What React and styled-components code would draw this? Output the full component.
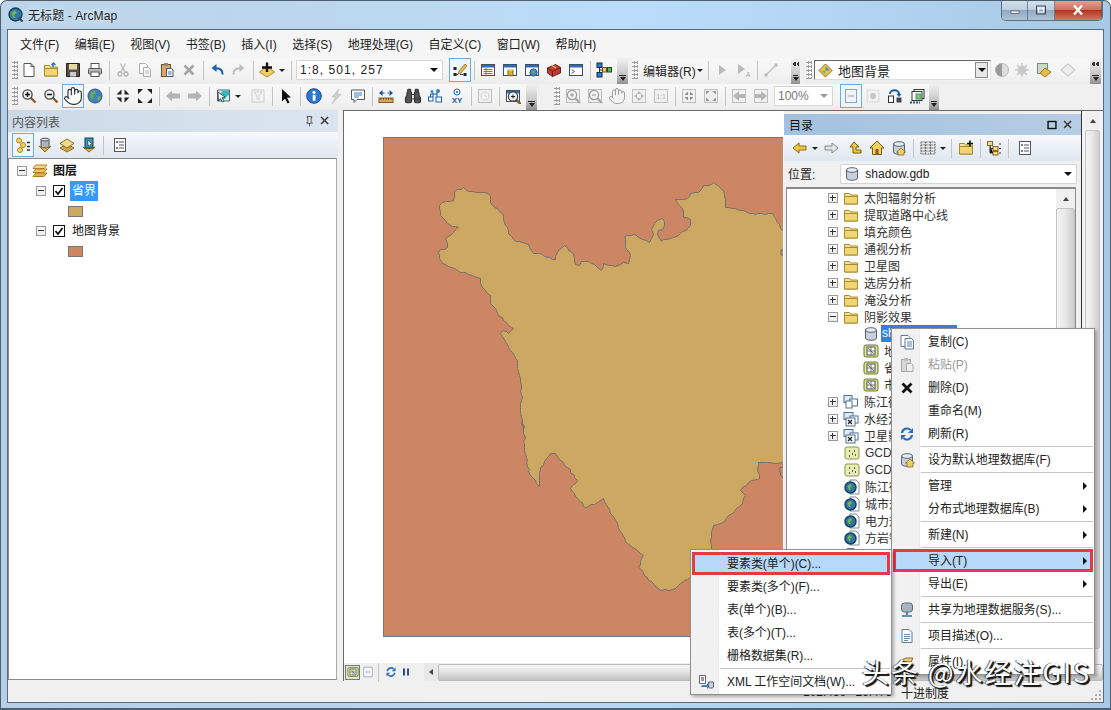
import React, { Fragment } from "react";
import styled, { createGlobalStyle } from "styled-components";
import { Hand, Binoculars } from "lucide-react";

const FONT = `"Liberation Sans", "Noto Sans CJK SC", sans-serif`;

const Global = createGlobalStyle`
  html, body { margin: 0; padding: 0; width: 1111px; height: 710px; overflow: hidden; background: #fff; }
  * { box-sizing: border-box; }
  body { font-family: ${FONT}; font-size: 12px; color: #1c1c1c; }
`;

const Win = styled.div`
  position: relative; width: 1111px; height: 710px; overflow: hidden; display: flex; flex-direction: column;
  background: linear-gradient(90deg, #b4d0e8 0%, #b9d6ee 40%, #b2d6f6 60%, #a9cae6 100%);
  border-radius: 7px 7px 0 0; border: 1px solid #4f5f6e; border-width: 1px 1px 2px 1px;
`;
const TitleBar = styled.div`
  height: 28px; flex: none; display: flex; align-items: center; padding: 0 7px 1px 7px; gap: 4px;
  background: linear-gradient(90deg, rgba(255,255,255,.12), rgba(255,255,255,.05) 30%, rgba(190,225,255,.55) 55%, rgba(255,255,255,0) 90%);
`;
const TitleText = styled.span`color: #222; text-shadow: 0 0 6px rgba(255,255,255,.9); letter-spacing: .1px;`;
const Caption = styled.div`
  position: absolute; right: 7px; top: -1px; height: 21px; width: 102px; display: flex; overflow: hidden;
  border: 1px solid #5f6f80; border-top: 0; border-radius: 0 0 5px 5px;
`;
const CapBtn = styled.div`
  display: flex; align-items: center; justify-content: center; width: ${p => p.$w}px; color: #fff;
  border-right: 1px solid rgba(70,85,100,.6);
  background: ${p => p.$close
    ? "linear-gradient(#e2a79c, #d0705f 48%, #b8341f 52%, #cf7767)"
    : "linear-gradient(#d4e1ec, #bdcfdf 48%, #8faac2 52%, #afc4d6)"};
`;
const Client = styled.div`
  height: 674px; margin: 0 6px; flex: none; display: flex; flex-direction: column;
  background: #f0f0f0; border: 1px solid #5a6a78;
`;
const MenuBar = styled.div`height: 28px; flex: none; display: flex; align-items: center; padding: 0 0 2px 4.25px; background: #f5f5f5;`;
const MenuItem = styled.span`padding: 0 7.75px; white-space: nowrap; color: #222;`;
const ToolRow = styled.div`height: 26px; flex: none; display: flex; padding-left: 4px; background: #f0f0f0; align-items: stretch;`;
const ToolGroup = styled.div`
  display: flex; align-items: center; flex: none; margin-left: ${p => p.$ml || 0}px; padding-bottom: 2px;
  background: linear-gradient(#f8f8f8, #f3f3f3 60%, #ececec);
`;
const Grip = styled.div`
  width: 6px; height: 18px; flex: none;
  background: radial-gradient(circle at 1.5px 1.5px, #9a9a9a 1px, transparent 1.2px) 1px 0 / 3px 4px;
`;
const Handle = styled.div`
  position: relative; width: ${p => p.$w || 11}px; align-self: stretch; flex: none; margin-bottom: -2px;
  background: linear-gradient(#f2f2f2, #c9c9c9 60%, #8f8f8f);
  &::before { content: ""; position: absolute; left: 2px; right: 2px; bottom: 8px; height: 1px; background: #222; }
  &::after { content: ""; position: absolute; left: 50%; margin-left: -3px; bottom: 3px; border: 3px solid transparent; border-top: 4px solid #222; border-bottom: 0; }
`;
const Chev = styled.span`
  position: absolute; z-index: 1; top: 4px; left: 1px; right: 1px; height: 4px;
  background: conic-gradient(from 45deg at 0 50%, #333 90deg, transparent 0) 0 0 / 4px 4px repeat-x;
`;
const Tool = styled.div`
  width: ${p => p.$w || 22}px; height: ${p => p.$active ? 24 : 22}px; flex: none; display: flex; align-items: center; justify-content: center;
  ${p => p.$active ? "background: #eef5fc; outline: 1px solid #6fa8dc; outline-offset: -1px;" : ""}
`;
const Sep = styled.div`width: 6px; flex: none; height: 19px; display: flex; justify-content: center; &::before { content: ""; width: 1px; background: #c4c4c4; }`;
const Caret = styled.div`width: 8px; flex: none; display: flex; justify-content: center; &::before { content: ""; border: 3px solid transparent; border-top: 3px solid #222; border-bottom: 0; }`;
const Gap = styled.div`width: ${p => p.$w}px; flex: none;`;
const IconSvg = styled.svg`
  width: ${p => p.$s || 16}px; height: ${p => p.$s || 16}px; flex: none; display: block;
  ${p => p.$dim ? "filter: grayscale(1) opacity(.5);" : ""}
`;
const MapSvg = styled.svg`width: 400px; height: 500px; display: block; flex: none;`;
const Combo = styled.div`
  width: ${p => p.$w}px; height: 20px; flex: none; display: flex; align-items: center; padding: 0 5px 0 3px; background: #fff;
  border: 1px solid ${p => p.$dark ? "#555" : "#d4d4d4"}; border-radius: 1px; white-space: nowrap;
  ${p => p.$dark ? "border-color: #666 #ddd #ddd #666;" : ""}
`;
const ComboLabel = styled.span`flex: 1; font-size: ${p => p.$fs || 12}px; letter-spacing: ${p => p.$ls || 0}px; color: ${p => p.$c || "#222"}; display: flex; align-items: center; gap: 5px;`;
const ComboDrop = styled.div`
  width: 13px; height: 16px; flex: none; display: flex; align-items: center; justify-content: center; margin-right: -3px;
  ${p => p.$box ? "background:#e8e8e8; border:1px solid #888;" : ""}
  &::before { content: ""; border: 4px solid transparent; border-top: 4px solid ${p => p.$c || "#111"}; border-bottom: 0; }
`;
const EditorLabel = styled.span`width: 51px; flex: none; white-space: nowrap; color: #222;`;

const Main = styled.div`height: 572px; flex: none; display: flex;`;
const Toc = styled.div`width: 330px; flex: none; display: flex; flex-direction: column; margin-right: 5px;`;
const PaneHead = styled.div`
  height: ${p => p.$h}px; flex: none; display: flex; align-items: center; padding: 0 5px 0 ${p => p.$pl}px;
  background: ${p => p.$blue ? "linear-gradient(90deg,#a3c1df,#b6cde3)" : "linear-gradient(90deg,#cbd9e7,#dbe5ef)"};
  color: ${p => p.$blue ? "#111" : "#555"};
`;
const PaneTitle = styled.span`flex: 1;`;
const PaneBtn = styled.div`width: 16px; height: 16px; flex: none; display: flex; align-items: center; justify-content: center;`;
const PaneTools = styled.div`
  height: ${p => p.$h}px; flex: none; display: flex; align-items: center; padding-left: ${p => p.$pl}px;
  background: linear-gradient(#f6f8fb, #dfe7f0);
`;
const TocTree = styled.div`flex: 1; margin: 0 1px 2px 0; padding-top: 2px; background: #fff; border: 1px solid #8a8a8a; border-right-color: #a8a8a8;`;
const TocRow = styled.div`height: 20px; display: flex; align-items: center; padding-left: ${p => p.$in}px;`;
const Expand = styled.div`
  position: relative; width: 10px; height: 10px; flex: none; margin-right: ${p => p.$mr || 0}px; background: linear-gradient(#fff, #e8e8e8); border: 1px solid #9a9a9a;
  &::before { content: ""; position: absolute; left: 1px; right: 1px; top: 3px; height: 1px; background: #333; }
  ${p => p.$plus ? `&::after { content: ""; position: absolute; top: 1px; bottom: 1px; left: 3px; width: 1px; background: #333; }` : ""}
`;
const Check = styled.div`
  width: 12px; height: 12px; flex: none; background: #fff; border: 1px solid #111; display: flex; align-items: center; justify-content: center;
`;
const LayerName = styled.span`
  margin-left: ${p => p.$ml}px; padding: 0 2px; height: ${p => p.$sel ? 20 : 16}px; line-height: ${p => p.$sel ? 20 : 16}px;
  ${p => p.$sel ? "background: #3399ff; color: #fff;" : "color:#111;"}
`;
const Swatch = styled.div`width: 15px; height: 11px; background: ${p => p.$c}; border: 1px solid #777;`;
const SwatchRow = styled.div`height: 20px; display: flex; align-items: center; padding-left: 59px;`;

const MapPane = styled.div`flex: 1; min-width: 0; display: flex; flex-direction: column; background: #f0f0f0;`;
const MapRow = styled.div`height: 553px; flex: none; display: flex; border: 1px solid #6a6a6a; border-width: 1px 0 0 1px;`;
const MapCanvas = styled.div`width: 440px; flex: none; overflow: hidden; background: #fff; padding: 26px 0 0 39px;`;
const Catalog = styled.div`width: 298px; flex: none; display: flex; flex-direction: column; background: #f0f0f0; padding-top: 3px; border-right: 1px solid #333;`;
const LocationRow = styled.div`height: 26px; flex: none; display: flex; align-items: center; padding: 0 3px 1px 4px; gap: 25px;`;
const CatTree = styled.div`flex: 1; min-height: 0; display: flex; margin: 0 5px 0 2px; background: #fff; border: 1px solid #8a8a8a; border-width: 2px 1px 1px 1px; overflow: hidden;`;
const CatList = styled.div`flex: 1; min-width: 0;`;
const CatRow = styled.div`height: 17px; display: flex; align-items: center; white-space: nowrap; overflow: hidden; padding-left: ${p => p.$in}px;`;
const CatText = styled.span`
  margin-left: ${p => p.$sel ? 2 : 5}px; color: #333; font-size: 12px;
  ${p => p.$sel ? "background: #2f80e8; color: #fff; width: 76px; padding-left: 1px; height: 17px; line-height: 17px;" : ""}
`;
const VBar = styled.div`
  width: ${p => p.$w}px; flex: none; display: flex; flex-direction: column; align-items: stretch; background: #f0f0f0;
`;
const VBtn = styled.div`height: 19px; flex: none; display: flex; align-items: center; justify-content: center; &::before { content: ""; border: 3px solid transparent; border-bottom: 4px solid #444; border-top: 0; }`;
const VThumb = styled.div`flex: 1; margin-bottom: 14px; background: linear-gradient(90deg, #f4f4f4, #e6e6e6 50%, #cdcdcd); border: 1px solid #c4c4c4; border-radius: 2px;`;
const MapBottom = styled.div`height: 18px; flex: none; display: flex; align-items: center; padding-left: 1px; border-left: 1px solid #666;`;
const ViewBtn = styled.div`width: 15px; height: 15px; flex: none; display: flex; align-items: center; justify-content: center; ${p => p.$on ? "background:#dbe8d8; outline:1px solid #777; outline-offset:-1px;" : ""}`;
const HArrow = styled.div`width: 14px; height: 18px; margin-left: 11px; flex: none; display: flex; align-items: center; justify-content: center; background: #e8e8e8; &::before { content: ""; border: 3px solid transparent; border-right: 4px solid #444; border-left: 0; }`;
const HThumb = styled.div`flex: 1; height: 17px; background: linear-gradient(#f4f4f4, #e4e4e4 45%, #c4c4c4); border: 1px solid #bbb; border-radius: 2px;`;
const RightGap = styled.div`width: 3px; flex: none; background:#f4f4f4;`;
const Status = styled.div`height: 20px; flex: none; display: flex; align-items: center; padding-left: 795px; background: #f0f0f0; color: #222; gap: 9px; white-space: nowrap; position: relative;`;
const Resize = styled.div`position: absolute; right: 2px; bottom: 2px; width: 11px; height: 11px; background: radial-gradient(circle, #aaa 1px, transparent 1.2px) 0 0 / 4px 4px; clip-path: polygon(100% 0, 100% 100%, 0 100%);`;

const Popup = styled.div`
  position: absolute; z-index: ${p => p.$z}; left: ${p => p.$x}px; top: ${p => p.$y}px; width: ${p => p.$w}px; padding: ${p => p.$pt}px 1px 1px;
  background: linear-gradient(90deg, #f1f1f1 0, #f1f1f1 27px, #e6e6e6 28px, #fff 28px);
  border: 1px solid #8f8f8f; box-shadow: 2px 2px 3px rgba(0,0,0,.28);
`;
const PopItem = styled.div`
  position: relative; height: 23px; display: flex; align-items: center; padding-right: 8px; white-space: nowrap; color: ${p => p.$off ? "#9b9b9b" : "#222"};
  ${p => p.$hot ? "background: #b8d8f9; outline: 3px solid #e53a46; outline-offset: -3px;" : ""}
`;
const PopIcon = styled.div`width: 27px; flex: none; margin-right: 8px; display: flex; justify-content: center;`;
const PopLabel = styled.span`flex: 1; padding-bottom: 2px; letter-spacing: -.05px;`;
const PopArrow = styled.div`border: 4px solid transparent; border-left: 4px solid #111; border-right: 0; margin-right: -2px;`;
const PopSep = styled.div`height: 3px; margin-left: 28px; display: flex; align-items: center; &::before { content: ""; flex: 1; height: 1px; background: #c6c6c6; }`;
const Watermark = styled.div`
  position: absolute; z-index: 5; left: 861px; top: 653px; font: 27px/36px "Noto Sans CJK SC", "Liberation Sans", sans-serif; letter-spacing: 2px; white-space: nowrap;
  color: #fff; text-shadow: 2px 2px 1px #111, 1px 1px 1px #222, -1px 0 1px rgba(0,0,0,.7);
`;

/* ---------- icons ---------- */
const Y = "#f2cf5e", YD = "#b98a1e";
const lines = <path d="M5 6.5h6M5 8.5h6M5 10.5h6M5 12.5h4" stroke="#6c8aa6" />;
const folderShape = <><path d="M1.5 3.5h5l1 1.5h7v9h-13z" fill="#f7e49a" stroke="#a98a2e" /><path d="M1.5 6.5h13v7.5h-13z" fill="#f2d675" stroke="#a98a2e" /></>;
const win = c => <><rect x="1.5" y="2.5" width="13" height="11" fill="#fff" stroke="#3d4f66" /><rect x="2" y="3" width="12" height="2.5" fill={c} /></>;
const cyl = <><path d="M2.5 4v8c0 1.3 2.4 2.3 5.5 2.3s5.5-1 5.5-2.3V4z" fill="#c7d0dc" stroke="#5a6573" /><ellipse cx="8" cy="4" rx="5.5" ry="2.3" fill="#e7ecf2" stroke="#5a6573" /></>;
const glass = (x = 6.5, y = 6.5) => <><path d={`M${x + 3} ${y + 3}l5 5`} stroke="#8a5a2a" strokeWidth="2.4" /><circle cx={x} cy={y} r="4.6" fill="#eef3f8" stroke="#444" strokeWidth="1.3" /></>;
const globe = <><circle cx="8" cy="8" r="7" fill="#3f7fc4" stroke="#2a5a90" /><path d="M4 4.5l4-2 1 3-3 2 1 3-2 1-2-3zM10 9l3-1 .5 3-2.5 2z" fill="#6fae4a" /></>;
const arrows = o => <path d={o ? "M1 1h5L1 6zM15 1h-5l5 5zM1 15h5l-5-5zM15 15h-5l5-5z" : "M6.5 6.5h-5l5-5zM9.5 6.5h5l-5-5zM6.5 9.5h-5l5 5zM9.5 9.5h5l-5 5z"} fill="#222" />;
const gridW = <rect x="1.5" y="1.5" width="13" height="13" fill="#eee" stroke="#888" />;

const I = {
  arcmap: <><circle cx="7.5" cy="7.5" r="6.5" fill="#2f78a8" stroke="#16435f" strokeWidth="1.4" /><path d="M3 6l4-3 2 3-3 2 1 3-2 0z" fill="#79b24e" /><path d="M10.5 10.5l4 4" stroke="#445" strokeWidth="2.4" /></>,
  new: <><path d="M3 1.5h7l3 3v10H3z" fill="#fff" stroke="#555" /><path d="M10 1.5v3h3" fill="none" stroke="#555" /></>,
  open: <>{folderShape}<path d="M10 5V1.5M8.5 3l2-2 2 2" stroke="#2a6fb0" fill="none" strokeWidth="1.3" /></>,
  save: <><path d="M1.5 1.5h13v13h-13z" fill="#5a5040" stroke="#222" /><rect x="4" y="2" width="8" height="5.5" fill="#e6d9a8" /><rect x="5" y="10" width="6" height="4.5" fill="#c8ccd0" /></>,
  print: <><rect x="4" y="1.5" width="8" height="5" fill="#fff" stroke="#555" /><rect x="1.5" y="6.5" width="13" height="5.5" rx="1" fill="#b5bbc2" stroke="#555" /><rect x="4" y="10" width="8" height="4.5" fill="#fff" stroke="#555" /></>,
  cut: <><circle cx="5" cy="12" r="2" fill="none" stroke="#777" strokeWidth="1.3" /><circle cx="11" cy="12" r="2" fill="none" stroke="#777" strokeWidth="1.3" /><path d="M6 10L10.5 1.5M10 10L5.5 1.5" stroke="#777" strokeWidth="1.2" /></>,
  copy: <><path d="M2.5 1.5h6l2 2v8h-8z" fill="#fff" stroke="#667" /><path d="M6.5 5.5h5l2 2v7h-7z" fill="#f4f7fb" stroke="#667" /><path d="M8 9h4M8 11h4" stroke="#5a86b8" /></>,
  paste: <><rect x="2.5" y="2.5" width="9" height="12" fill="#d8a868" stroke="#6a5030" /><rect x="5" y="1" width="4" height="3" fill="#888" /><path d="M7.5 6.5h5l1.5 1.5v6.5H7.5z" fill="#fff" stroke="#556" /><path d="M9 10h3.5M9 12h3.5" stroke="#27c" /></>,
  del: <path d="M3.5 3.5l9 9M12.5 3.5l-9 9" stroke="#555" strokeWidth="2.6" />,
  undo: <><path d="M13.5 12.5c.5-4-2-6.5-7-6" fill="none" stroke="#1d62b0" strokeWidth="2.2" /><path d="M7.5 2L2.5 6l5 4z" fill="#1d62b0" /></>,
  redo: <><path d="M2.5 12.5c-.5-4 2-6.5 7-6" fill="none" stroke="#888" strokeWidth="2.2" /><path d="M8.5 2l5 4-5 4z" fill="#888" /></>,
  add: <><path d="M8 5l7.5 5L8 15 .5 10z" fill={Y} stroke={YD} /><path d="M8 .5v9.5M3 5.5h10" stroke="#111" strokeWidth="2.4" /></>,
  editor: <><path d="M3 12.5h10" stroke="#333" strokeDasharray="3 2" /><rect x="1.5" y="11" width="3" height="3" fill="#222" /><rect x="11.5" y="11" width="3" height="3" fill="#222" /><rect x="1.5" y="5" width="3" height="3" fill="#222" /><path d="M7 9l6-7 2 2-6 7-3 1z" fill="#e9b94a" stroke="#8a6a20" strokeWidth=".7" /></>,
  win1: <>{win("#2f6cb8")}<path d="M3.5 7.5h9M3.5 9.5h9M3.5 11.5h9M6 6v7" stroke="#4a80c0" /></>,
  win2: <>{win("#2f6cb8")}<path d="M6 8v5c0 1 5 1 5 0V8z" fill="#d8b030" stroke="#7a6010" /><ellipse cx="8.5" cy="8" rx="2.5" ry="1" fill="#f4dc70" /></>,
  win3: <>{win("#2f6cb8")}<circle cx="9.5" cy="10.5" r="3.6" fill="#3f8ac4" stroke="#2a5a90" /><path d="M8 9l2-1 1 2-2 2z" fill="#6fae4a" /></>,
  box: <><path d="M1.5 6l8-3.5 5 3v5.5l-8 3.5-5-3.5z" fill="#c23c34" stroke="#6e1f1a" /><path d="M1.5 6l5 3.5 8-4M6.5 9.5v5.5" stroke="#6e1f1a" fill="none" /><path d="M5 3l5 3" stroke="#e6c46c" strokeWidth="1.4" /></>,
  py: <>{win("#2f6cb8")}<path d="M4 7.5l2 2-2 2" stroke="#222" fill="none" /></>,
  model: <><rect x="1" y="1" width="5" height="4.5" fill="#2f78d0" stroke="#134" /><rect x="1" y="10.5" width="5" height="4.5" fill="#2f78d0" stroke="#134" /><rect x="6.5" y="5.5" width="4" height="4.5" fill="#f0d040" stroke="#654" /><rect x="11.5" y="5.5" width="4" height="4.5" fill="#50c040" stroke="#243" /><path d="M3.5 5.5v5M3.5 8h3M10.5 8h1" stroke="#333" /></>,
  zoomin: <>{glass()}<path d="M4 6.5h5M6.5 4v5" stroke="#111" strokeWidth="1.4" /></>,
  zoomout: <>{glass()}<path d="M4 6.5h5" stroke="#111" strokeWidth="1.4" /></>,
  globe,
  fixin: arrows(false),
  fixout: arrows(true),
  back: <path d="M1 8l6-5.5V5.5h8v5H7v3z" fill="#b4b4b4" />,
  fwd: <path d="M15 8L9 2.5V5.5H1v5h8v3z" fill="#b4b4b4" />,
  sel: <><path d="M2.5 2h12v11h-12z" fill="#d4f0e8" stroke="#4a6a72" /><path d="M3 8l5-5.5h6v4l-6 6H3z" fill="#39b8c4" /><path d="M3 4l7 5-3 .7 2 3.3-1.6 1-2-3.4L3.5 13z" fill="#fff" stroke="#222" strokeWidth=".7" /></>,
  clear: <><rect x="2" y="2" width="12" height="12" fill="#f2f2f2" stroke="#aaa" /><path d="M4 4h8L9 8v4l-2-1V8z" fill="none" stroke="#aaa" /></>,
  arrow: <path d="M4 1l9 8.5-4 .3 2.6 4.7-2 1-2.5-4.8L4 13.5z" fill="#111" />,
  info: <><circle cx="8" cy="8" r="7.3" fill="#2a78d4" stroke="#124a8e" /><rect x="6.7" y="6.8" width="2.8" height="6" fill="#fff" /><circle cx="8" cy="4.4" r="1.6" fill="#fff" /></>,
  bolt: <path d="M11 1L4 9h3.5L4 15.5 13 6.5H9z" fill="#d2d2d2" stroke="#b5b5b5" strokeWidth=".6" />,
  popup: <><path d="M1.5 2h13v9.5H7L4 14.5v-3H1.5z" fill="#fff" stroke="#555" /><path d="M4 5h8M4 7h8M4 9h5" stroke="#3c78b8" /></>,
  measure: <><rect x="1" y="10" width="14" height="4.5" fill="#d9a55b" stroke="#84592a" /><path d="M3 10v2M5.5 10v2M8 10v2M10.5 10v2M13 10v2" stroke="#84592a" /><path d="M1 5l3.5-3v6zM15 5l-3.5-3v6zM4 4.4h2.6v1.2H4zM9.4 4.4H12v1.2H9.4z" fill="#1d4f9e" /></>,
  route: <><rect x="1.5" y="9" width="4.5" height="4" fill="#fff" stroke="#1b5fa8" /><rect x="9" y="9" width="5.5" height="5" fill="#fff" stroke="#1b5fa8" /><path d="M6 5v4M3.5 9V6h7M10 4v5" stroke="#1b5fa8" fill="none" /><circle cx="11" cy="3" r="2" fill="#2a88d4" /><circle cx="5" cy="3.5" r="1.5" fill="#2a88d4" /></>,
  xy: <><circle cx="8" cy="4" r="3" fill="#fff" stroke="#1b5fa8" /><circle cx="8" cy="4" r="1" fill="#1b5fa8" /><text x="8" y="15" fontSize="8" fontWeight="700" fill="#1b5fa8" textAnchor="middle" fontFamily="Liberation Sans">XY</text></>,
  time: <>{gridW}<circle cx="8" cy="8" r="4" fill="#fff" stroke="#aaa" /><path d="M8 5.5V8l2 1" stroke="#aaa" fill="none" /></>,
  viewer: <>{win("#2f6cb8")}{glass(8, 8.5)}<path d="M6 8.5h4M8 6.5v4" stroke="#222" /></>,
  lzin: <>{gridW}{glass(7, 7)}<path d="M5 7h4M7 5v4" stroke="#333" /></>,
  lzout: <>{gridW}{glass(7, 7)}<path d="M5 7h4" stroke="#333" /></>,
  lfull: <>{gridW}<path d="M8 3l2.5 3h-5zM8 13l2.5-3h-5zM3 8l3-2.5v5zM13 8l-3-2.5v5z" fill="#777" /></>,
  l11: <>{gridW}<text x="8" y="11" fontSize="7" fill="#666" textAnchor="middle" fontFamily="Liberation Sans">1:1</text></>,
  lfixin: <>{gridW}<g transform="translate(2.4 2.4) scale(.7)">{arrows(false)}</g></>,
  lfixout: <>{gridW}<g transform="translate(2.4 2.4) scale(.7)">{arrows(true)}</g></>,
  lback: <>{gridW}<path d="M2 8l6-5v3h6v4H8v3z" fill="#777" /></>,
  lfwd: <>{gridW}<path d="M14 8L8 3v3H2v4h6v3z" fill="#777" /></>,
  lpage: <><rect x="2.5" y="1.5" width="11" height="13" fill="#f1f4f8" stroke="#8ea2b6" /><path d="M5 8h6" stroke="#8ea2b6" /></>,
  lchange: <><rect x="2" y="2" width="12" height="12" fill="#f0f0f0" stroke="#999" strokeDasharray="1.5 1" /><circle cx="8" cy="8" r="3" fill="#999" /></>,
  share: <><path d="M3 6c0-5 9-5 9 0" fill="none" stroke="#1c5ea4" strokeWidth="2" /><path d="M9.5 6h5L12 9z" fill="#1c5ea4" /><rect x="1.5" y="8" width="5" height="6.5" fill="#fff" stroke="#333" /><rect x="9.5" y="9.5" width="5" height="5" fill="#445" /></>,
  frames: <><rect x="5" y="1.5" width="10" height="9" fill="#fff" stroke="#333" /><rect x="3" y="3.5" width="10" height="9" fill="#fff" stroke="#333" /><rect x="7" y="6" width="5" height="5" fill="#8cc26c" stroke="#496" /><path d="M1 14.5h10" stroke="#1c5ea4" strokeWidth="2" strokeDasharray="2 1" /></>,
  ldraw: <><circle cx="4" cy="3.5" r="2.5" fill={Y} stroke={YD} /><circle cx="8" cy="8" r="2.5" fill={Y} stroke={YD} /><circle cx="5" cy="13" r="2.5" fill={Y} stroke={YD} /><path d="M12 5.5h3M12 9.5h3M12 13h3" stroke="#333" strokeWidth="1.3" /></>,
  lsrc: <><path d="M4 2v8c0 1 8 1 8 0V2z" fill="#aab3be" stroke="#555" /><ellipse cx="8" cy="2.6" rx="4" ry="1.4" fill="#dfe4ea" stroke="#555" /><path d="M2 9l6 6 6-6c-3 2.5-9 2.5-12 0z" fill="#e2b24c" stroke="#8a6a20" /></>,
  lvis: <><path d="M8 7l7 4-7 4-7-4z" fill="#cfa94e" stroke="#8a6a20" /><path d="M8 2l7 4.5L8 11 1 6.5z" fill="#f2dc8c" stroke="#8a6a20" /></>,
  lsel: <><path d="M2 10l6 5 6-5c-3 2-9 2-12 0z" fill="#e2b24c" stroke="#8a6a20" /><rect x="4" y="1" width="8" height="10" fill="#1fa0c8" stroke="#333" /><path d="M7 3l4 4-2 .4.8 2-1 .4-1-2L7 9z" fill="#fff" stroke="#222" strokeWidth=".5" /></>,
  stack: <><path d="M4 2h11l-3 3.5H1z" fill="#f6d98a" stroke="#b07e20" /><path d="M4 6h11l-3 3.5H1z" fill="#f0c566" stroke="#b07e20" /><path d="M4 10h11l-3 3.5H1z" fill="#e6ae48" stroke="#b07e20" /></>,
  opts: <><rect x="2.5" y="1.5" width="11" height="13" fill="#fff" stroke="#555" /><circle cx="5" cy="5" r="1" fill="#555" /><circle cx="5" cy="11" r="1" fill="#555" /><path d="M7 5h5M7 8h5M7 11h5" stroke="#555" /></>,
  pin: <path d="M5 2h6v1h-1v5l1.5 2h-7L6 8V3H5zM8 10v4" fill="#f5f5f5" stroke="#333" />,
  close: <path d="M3.5 3.5l8 8M11.5 3.5l-8 8" stroke="#333" strokeWidth="1.7" />,
  restore: <rect x="3.5" y="4" width="9" height="8" fill="none" stroke="#111" strokeWidth="1.6" />,
  cBack: <path d="M1 8l6-5v3h7v4H7v3z" fill="#f0c83c" stroke="#8a6a10" />,
  cFwd: <path d="M15 8L9 3v3H2v4h7v3z" fill="#e5e5e5" stroke="#888" />,
  cUp: <path d="M7 2l5 5H9v3h5v3H6V7H3z" fill="#f0c83c" stroke="#7a5a10" />,
  cHome: <><path d="M8 1L1 8h2.5v6.5h9V8H15z" fill="#f0d060" stroke="#7a5a10" /><rect x="6.5" y="9" width="3" height="5.5" fill="#8a5a20" /></>,
  cConn: <>{cyl}<path d="M10 8l-4.5 4h1.5v3h6v-3h1.5z" fill="#f0d060" stroke="#7a5a10" strokeWidth=".7" /></>,
  cView: <path d="M1 2h14v12H1zM1 5h14M1 8h14M1 11h14M5.5 2v12M10.5 2v12" fill="#eee" stroke="#555" strokeDasharray="1 .6" />,
  cNew: <>{folderShape}<path d="M12 .5v6M9 3.5h6" stroke="#111" strokeWidth="1.6" /></>,
  cTree: <><rect x="1.5" y="1.5" width="5" height="4" fill="#f2dc8c" stroke="#8a6a20" /><rect x="7" y="6.5" width="5" height="4" fill="#f2dc8c" stroke="#8a6a20" /><rect x="7" y="11.5" width="5" height="3.5" fill="#f2dc8c" stroke="#8a6a20" /><path d="M4 5.5v7.5h3M4 8.5h3M13 4h2M13 8.5h2M13 13h2" stroke="#333" /></>,
  folder: folderShape,
  gdb: cyl,
  fds: <><rect x="1" y="2" width="14" height="12" rx="2" fill="#dbe29a" stroke="#6b7a2a" /><rect x="4" y="4" width="8" height="8" fill="#fff" stroke="#555" /><path d="M4 8h8M8 4v8M5 5l6 6" stroke="#555" strokeWidth=".8" /></>,
  group: <><rect x="1" y="1.5" width="8" height="7" fill="#dfeaf4" stroke="#4a6f96" /><rect x="6.5" y="5" width="8" height="7" fill="#fff" stroke="#4a6f96" /><rect x="3" y="7" width="6" height="7" fill="#fff" stroke="#4a6f96" /></>,
  groupx: <><rect x="1" y="1.5" width="9" height="7" fill="#dfeaf4" stroke="#4a6f96" /><rect x="7" y="5" width="8" height="7" fill="#fff" stroke="#4a6f96" /><rect x="3" y="7" width="9" height="8" fill="#fff" stroke="#4a6f96" /><path d="M5 9l4 4M9 9l-4 4" stroke="#222" strokeWidth="1.4" /></>,
  gcd: <><rect x="1" y="2" width="14" height="12" rx="2" fill="#e9ecb0" stroke="#8b9450" /><path d="M5 6h1M10 6h1M8 9h1M5 11h1M11 10h1" stroke="#234" strokeWidth="1.4" /></>,
  mxd: <><path d="M6 1h6l3 3v11H6z" fill="#fff" stroke="#7a8a9a" /><circle cx="6.5" cy="8.5" r="5.5" fill="#2f78a8" stroke="#16435f" strokeWidth="1.5" /><path d="M3.5 7l3-2 1.5 2-2 2 .5 2h-1.5z" fill="#79b24e" /></>,
  mCopy: <><path d="M2 1.5h7l2 2v9H2z" fill="#fff" stroke="#5e7a98" /><path d="M6 4.5h6.5l2 2v8.5H6z" fill="#f6f9fc" stroke="#5e7a98" /><path d="M8 8h5M8 10h5M8 12h5" stroke="#5e86b0" /></>,
  mPaste: <><rect x="2.5" y="2.5" width="9" height="12" fill="#d8d8d8" stroke="#aaa" /><rect x="5" y="1" width="4" height="3" fill="#bbb" /><path d="M7.5 6.5h5l1.5 1.5v6.5H7.5z" fill="#eee" stroke="#aaa" /></>,
  mDel: <path d="M3.5 3.5l9 9M12.5 3.5l-9 9" stroke="#111" strokeWidth="2.8" />,
  mRef: <><path d="M3 7a5 5 0 0 1 8.5-3" fill="none" stroke="#2a6ab8" strokeWidth="2.2" /><path d="M14 2v5H9z" fill="#2a6ab8" /><path d="M13 9a5 5 0 0 1-8.5 3" fill="none" stroke="#2a6ab8" strokeWidth="2.2" /><path d="M2 14V9h5z" fill="#2a6ab8" /></>,
  mDb: <>{cyl}<path d="M11 7l-4.5 4H8v4h6v-4h1.5z" fill="#f0d060" stroke="#7a5a10" strokeWidth=".7" /></>,
  mShare: <><rect x="2.5" y="1" width="11" height="9" rx="3" fill="#a8b4c2" stroke="#5c6b7a" /><path d="M8 10v3M3 14h10" stroke="#3c6ea8" strokeWidth="1.6" /></>,
  mDesc: <><path d="M3 1.5h7l3 3v10H3z" fill="#fff" stroke="#5e7a98" />{lines}</>,
  mProp: <><path d="M1 7l6-3h7l-2 4z" fill="#e8cc80" stroke="#8a6a20" /><path d="M3 10h9v4H3z" fill="#aaa" /></>,
  mXml: <><path d="M1.5 1.5h6v8h-6z" fill="#fff" stroke="#667" /><path d="M3 4h3M3 6h3" stroke="#333" /><path d="M4 11h5v-2l3 3-3 3v-2H3z" fill="#3f7fc4" /><path d="M10.5 8v5c0 1.5 5 1.5 5 0V8z" fill="#c7d0dc" stroke="#5a6573" /></>,
  eStart: <path d="M5 3l7 5-7 5z" fill="#bbb" />,
  eAttr: <><path d="M3 2l7 5-7 5z" fill="#bbb" /><text x="13" y="15" fontSize="7" fill="#aaa" textAnchor="middle" fontFamily="Liberation Sans">A</text></>,
  eLine: <><path d="M3 13L13 3" stroke="#bbb" strokeWidth="1.3" /><rect x="1.5" y="11.5" width="3" height="3" fill="#bbb" /><rect x="11.5" y="1.5" width="3" height="3" fill="#bbb" /></>,
  eHalf: <><circle cx="8" cy="8" r="6.5" fill="#ddd" stroke="#bbb" /><path d="M8 1.5a6.5 6.5 0 0 0 0 13z" fill="#999" /></>,
  eSun: <><circle cx="8" cy="8" r="4.5" fill="#c9c9c9" /><path d="M8 1v14M1 8h14M3 3l10 10M13 3L3 13" stroke="#c9c9c9" strokeWidth="1.5" /></>,
  eSym: <><rect x="1.5" y="1.5" width="10" height="10" fill="#c8dcc0" stroke="#789" /><path d="M9 6l6 4-6 5-5-4z" fill="#e8b84a" stroke="#a07820" /></>,
  eDia: <path d="M8 2l7 6-7 6-7-6z" fill="#eee" stroke="#ccc" strokeWidth="1.3" />,
  lyr: <><path d="M8 1l7 7-7 7-7-7z" fill="#f0c24c" stroke="#8a6410" /><path d="M8 3.5L12.5 8 8 8z" fill="#3f8ac4" /><path d="M3.5 8H8v4.5z" fill="#7fb850" /></>,
};
const Icon = ({ n, dim, s }) => <IconSvg viewBox="0 0 16 16" $dim={dim} $s={s}>{I[n]}</IconSvg>;

const toolIcon = (name, dim) => {
  if (name === "pan") return <Hand size={20} strokeWidth={1.4} color="#333" fill="#fff" />;
  if (name === "lpan") return <Hand size={18} strokeWidth={1.3} color="#999" fill="#f4f4f4" />;
  if (name === "bino") return <Binoculars size={18} strokeWidth={1.6} color="#333" fill="#555" />;
  return <Icon n={name} dim={dim} />;
};

const renderItems = items => items.map((it, k) => {
  let el;
  if (typeof it === "number") el = <Gap $w={it} />;
  else if (typeof it !== "string") el = it;
  else if (it === "G") el = <Grip />;
  else if (it === "|") el = <Sep />;
  else if (it === "v") el = <Caret />;
  else {
    const m = /^(\*?)(\w+)(~?)(?::(\d+))?$/.exec(it);
    el = <Tool $active={!!m[1]} $w={m[4] ? +m[4] : 22}>{toolIcon(m[2], !!m[3])}</Tool>;
  }
  return <Fragment key={k}>{el}</Fragment>;
});

const scale = (
  <Combo $w={147}>
    <ComboLabel $ls={1.05}>1:8, 501, 257</ComboLabel>
    <ComboDrop />
  </Combo>
);
const zoomBox = (
  <Combo $w={59}>
    <ComboLabel $c="#777">100%</ComboLabel>
    <ComboDrop $c="#999" />
  </Combo>
);
const layerBox = (
  <Combo $w={177} $dark>
    <ComboLabel $fs={13}><Icon n="lyr" s={15} />地图背景</ComboLabel>
    <ComboDrop $box />
  </Combo>
);

const G1 = ["G", "new", "open", "save", "print", "|", "cut~", "copy~", "paste", "del~", "|", "undo", "redo~", "|", "add", "v", 2, "|", 2, scale, 6, "*editor", "|", "win1", "win2", "win3", "box", "py", "|", "model", 2, <Handle />];
const G2 = ["G", 5, <EditorLabel>编辑器(R)</EditorLabel>, 2, "v", 1, "|", "eStart", "eAttr:20", 1, "|", "eLine", 9, <Handle $w={9}><Chev /></Handle>];
const G3 = ["G", 2, layerBox, 1, "eHalf:20", "eSun:20", 1, "eSym", 2, "eDia", 11, <Handle><Chev /></Handle>];
const R2a = ["G", "zoomin", "zoomout", "*pan", "globe", "|", "fixin", "fixout", "|", "back", "fwd", "|", "sel", "v", 5, "clear~", "|", "arrow", "|", "info", "bolt", "popup", "|", "measure", 5, "bino", "route", "xy", "|", "time~", "|", "viewer", 2, <Handle />];
const R2b = ["G", 2, "lzin~", "lzout~", "lpan", "lfull~", "l11~", "|", "lfixin~", "lfixout~", "|", "lback~", "lfwd~", 2, zoomBox, 7, "*lpage", "lchange~", "share", "frames", 1, <Handle $w={10} />];

/* ---------- map outline ---------- */
const up = [[296,225],[305,215],[340,210],[342,183],[370,172],[385,183],[445,188],[455,225],[485,250],[505,310],[525,333],[565,342],[578,368],[605,372],[645,388],[655,360],[672,345],[700,370],[705,403],[718,405],[722,392],[745,392],[770,410],[783,420],[790,400],[825,407],[850,397],[865,400],[870,375],[856,350],[853,318],[880,312],[895,322],[928,335],[940,312],[932,297],[950,270],[965,265],[972,285],[950,312],[962,332],[1000,320],[1015,315],[1050,285],[1050,268],[1030,260],[1025,235],[1005,207],[1040,205],[1050,190],[1075,185],[1090,165],[1120,157],[1150,180],[1155,230],[1200,240],[1245,252],[1295,250],[1325,300],[1400,300]].map(([x, y]) => [340 + x / 3, 130 + y / 3]);
const low = [[1400,125],[1325,125],[1300,130],[1255,125],[1250,150],[1258,175],[1225,185],[1200,210],[1215,225],[1205,250],[1165,285],[1150,305],[1118,315],[1113,350],[1113,385],[1050,470],[1020,490],[995,508],[960,510],[925,480],[895,440],[908,405],[890,390],[860,370],[835,320],[790,235],[770,245],[735,262],[690,205],[712,180],[680,140],[645,100],[630,100],[600,140],[597,197],[570,165],[555,100],[547,0]].map(([x, y]) => [340 + x / 3, 420 + y / 3]);
const upBack = [[550,900],[540,850],[545,800],[530,690],[505,650],[480,610],[485,600],[505,610],[520,595],[490,570],[450,520],[450,495],[425,470],[420,445],[350,420],[305,400],[293,365],[320,350],[315,325],[355,290],[320,280],[305,262]].map(([x, y]) => [340 + x / 3, 130 + y / 3]);

const jag = pts => {
  let seed = 7;
  const rnd = () => { seed = (seed * 16807) % 2147483647; return seed / 2147483647 - 0.5; };
  const out = [];
  pts.forEach((p, i) => {
    const q = pts[(i + 1) % pts.length];
    const L = Math.hypot(q[0] - p[0], q[1] - p[1]);
    const n = Math.max(1, Math.floor(L / 3));
    for (let t = 0; t < n; t++) {
      const a = t / n;
      const j = t === 0 ? 0 : 1.7;
      out.push(`${Math.round(p[0] + (q[0] - p[0]) * a + rnd() * j) + 0.5},${Math.round(p[1] + (q[1] - p[1]) * a + rnd() * j) + 0.5}`);
    }
  });
  return out.join(" ");
};
const outline = jag([...up, ...low, ...upBack]);

const MapDrawing = () => (
  <MapSvg viewBox="383 137 400 500">
    <rect x="383.5" y="137.5" width="420" height="499" fill="#cc8663" stroke="#777" />
    <polygon points={outline} fill="#cca862" stroke="#707070" strokeWidth="1" />
    <path d="M781 250h3v5h-3zM779 468l5-1v12l-3-3z" fill="#cc8663" stroke="#707070" />
  </MapSvg>
);

/* ---------- data ---------- */
const menus = ["文件(F)", "编辑(E)", "视图(V)", "书签(B)", "插入(I)", "选择(S)", "地理处理(G)", "自定义(C)", "窗口(W)", "帮助(H)"];
const folders = ["太阳辐射分析", "提取道路中心线", "填充颜色", "通视分析", "卫星图", "选房分析", "淹没分析"];
const catRows = [
  ...folders.map(t => ({ t, ic: "folder", x: "+" })),
  { t: "阴影效果", ic: "folder", x: "-" },
  { t: "shadow.gdb", ic: "gdb", d: 1, sel: true },
  { t: "地图背景", ic: "fds", d: 1 }, { t: "省界", ic: "fds", d: 1 }, { t: "市界", ic: "fds", d: 1 },
  { t: "陈江街道", ic: "group", x: "+" }, { t: "水经注", ic: "groupx", x: "+" }, { t: "卫星影像", ic: "groupx", x: "+" },
  { t: "GCD_1", ic: "gcd" }, { t: "GCD_2", ic: "gcd" },
  { t: "陈江街道.mxd", ic: "mxd" }, { t: "城市规划.mxd", ic: "mxd" }, { t: "电力规划.mxd", ic: "mxd" }, { t: "方岩镇.mxd", ic: "mxd" },
  { t: "市界.lyr", ic: "mDesc" },
];
const mainMenu = [
  { t: "复制(C)", i: "mCopy" }, { t: "粘贴(P)", i: "mPaste", off: true }, { t: "删除(D)", i: "mDel" }, { t: "重命名(M)" }, { t: "刷新(R)", i: "mRef" }, "-",
  { t: "设为默认地理数据库(F)", i: "mDb" }, "-",
  { t: "管理", a: true }, { t: "分布式地理数据库(B)", a: true }, "-",
  { t: "新建(N)", a: true }, "-",
  { t: "导入(T)", a: true, hot: true }, { t: "导出(E)", a: true }, "-",
  { t: "共享为地理数据服务(S)...", i: "mShare" }, "-", { t: "项目描述(O)...", i: "mDesc" }, "-", { t: "属性(I)...", i: "mProp" },
];
const subMenu = [
  { t: "要素类(单个)(C)...", hot: true }, { t: "要素类(多个)(F)..." }, { t: "表(单个)(B)..." }, { t: "表(多个)(T)..." }, { t: "栅格数据集(R)..." }, "-",
  { t: "XML 工作空间文档(W)...", i: "mXml" },
];
const renderMenu = list => list.map((m, k) => m === "-" ? <PopSep key={k} /> : (
  <PopItem key={k} $off={m.off} $hot={m.hot}>
    <PopIcon>{m.i ? <Icon n={m.i} /> : null}</PopIcon>
    <PopLabel>{m.t}</PopLabel>
    {m.a ? <PopArrow /> : null}
  </PopItem>
));

const CheckMark = () => (
  <IconSvg viewBox="0 0 10 10" $s={10}><path d="M1.5 5l2.5 3 4.5-6" fill="none" stroke="#111" strokeWidth="1.8" /></IconSvg>
);

export default function App() {
  return (
    <>
      <Global />
      <Win>
        <TitleBar>
          <Icon n="arcmap" s={16} />
          <TitleText>无标题 - ArcMap</TitleText>
        </TitleBar>
        <Caption>
          <CapBtn $w={27}><IconSvg viewBox="0 0 12 12" $s={12}><rect x="2" y="7" width="8" height="2.5" fill="#fff" stroke="#445" strokeWidth=".7" /></IconSvg></CapBtn>
          <CapBtn $w={27}><IconSvg viewBox="0 0 12 12" $s={12}><rect x="1.5" y="2" width="9" height="8" fill="none" stroke="#445" strokeWidth="1" /><rect x="3.5" y="4" width="5" height="4" fill="none" stroke="#fff" /></IconSvg></CapBtn>
          <CapBtn $w={48} $close><IconSvg viewBox="0 0 14 12" $s={14}><path d="M3 1.5l8 9M11 1.5l-8 9" stroke="#fff" strokeWidth="2.4" /></IconSvg></CapBtn>
        </Caption>
        <Client>
          <MenuBar>{menus.map(t => <MenuItem key={t}>{t}</MenuItem>)}</MenuBar>
          <ToolRow>
            <ToolGroup>{renderItems(G1)}</ToolGroup>
            <ToolGroup $ml={4}>{renderItems(G2)}</ToolGroup>
            <ToolGroup $ml={6}>{renderItems(G3)}</ToolGroup>
          </ToolRow>
          <ToolRow>
            <ToolGroup>{renderItems(R2a)}</ToolGroup>
            <ToolGroup $ml={17}>{renderItems(R2b)}</ToolGroup>
          </ToolRow>
          <Main>
            <Toc>
              <PaneHead $h={22} $pl={4}>
                <PaneTitle>内容列表</PaneTitle>
                <PaneBtn><Icon n="pin" s={13} /></PaneBtn>
                <PaneBtn><Icon n="close" s={14} /></PaneBtn>
              </PaneHead>
              <PaneTools $h={26} $pl={4}>
                {renderItems(["*ldraw", "lsrc", "lvis", "lsel", "|", 3, "opts"])}
              </PaneTools>
              <TocTree>
                <TocRow $in={8}><Expand $mr={5} /><Icon n="stack" /><LayerName $ml={3}><b>图层</b></LayerName></TocRow>
                <TocRow $in={27}><Expand $mr={7} /><Check><CheckMark /></Check><LayerName $ml={5} $sel>省界</LayerName></TocRow>
                <SwatchRow><Swatch $c="#cca862" /></SwatchRow>
                <TocRow $in={27}><Expand $mr={7} /><Check><CheckMark /></Check><LayerName $ml={5}>地图背景</LayerName></TocRow>
                <SwatchRow><Swatch $c="#cc8663" /></SwatchRow>
              </TocTree>
            </Toc>
            <MapPane>
              <MapRow>
                <MapCanvas><MapDrawing /></MapCanvas>
                <Catalog>
                  <PaneHead $h={21} $pl={5} $blue>
                    <PaneTitle>目录</PaneTitle>
                    <PaneBtn><Icon n="restore" s={14} /></PaneBtn>
                    <PaneBtn><Icon n="close" s={14} /></PaneBtn>
                  </PaneHead>
                  <PaneTools $h={26} $pl={5}>
                    {renderItems(["cBack", "v", 1, "cFwd", 2, "cUp", "cHome", "cConn", "|", 1, "cView", "v", 1, "|", 1, "cNew", "|", "cTree", "|", 3, "opts"])}
                  </PaneTools>
                  <LocationRow>
                    <span>位置:</span>
                    <Combo $w={237}>
                      <ComboLabel><Icon n="gdb" />shadow.gdb</ComboLabel>
                      <ComboDrop />
                    </Combo>
                  </LocationRow>
                  <CatTree>
                    <CatList>
                      {catRows.map(r => (
                        <CatRow key={r.t} $in={r.d ? 76 : r.x ? 41 : 57}>
                          {r.x ? <Expand $plus={r.x === "+"} $mr={5} /> : null}
                          <Icon n={r.ic} />
                          <CatText $sel={r.sel}>{r.t}</CatText>
                        </CatRow>
                      ))}
                    </CatList>
                    <VBar $w={19}><VBtn /><VThumb /></VBar>
                  </CatTree>
                </Catalog>
                <RightGap />
                <VBar $w={15}><VBtn /><VThumb /></VBar>
                <RightGap />
              </MapRow>
              <MapBottom>
                <ViewBtn $on><Icon n="fds" s={12} /></ViewBtn>
                <ViewBtn><Icon n="lpage" s={12} /></ViewBtn>
                <Sep />
                <Gap $w={2} />
                <ViewBtn><Icon n="mRef" s={12} /></ViewBtn>
                <ViewBtn><IconSvg viewBox="0 0 12 12" $s={12}><path d="M3 2.5h2v7H3zM7 2.5h2v7H7z" fill="#27508a" /></IconSvg></ViewBtn>
                <HArrow />
                <HThumb />
              </MapBottom>
            </MapPane>
          </Main>
          <Status>
            <span>102.439</span><span>26.475</span><span>十进制度</span>
            <Resize />
          </Status>
        </Client>
        <Popup $z={3} $x={890} $y={327} $w={204} $pt={1}>{renderMenu(mainMenu)}</Popup>
        <Popup $z={4} $x={689} $y={548} $w={202} $pt={2}>{renderMenu(subMenu)}</Popup>
        <Watermark>头条 @水经注GIS</Watermark>
      </Win>
    </>
  );
}
